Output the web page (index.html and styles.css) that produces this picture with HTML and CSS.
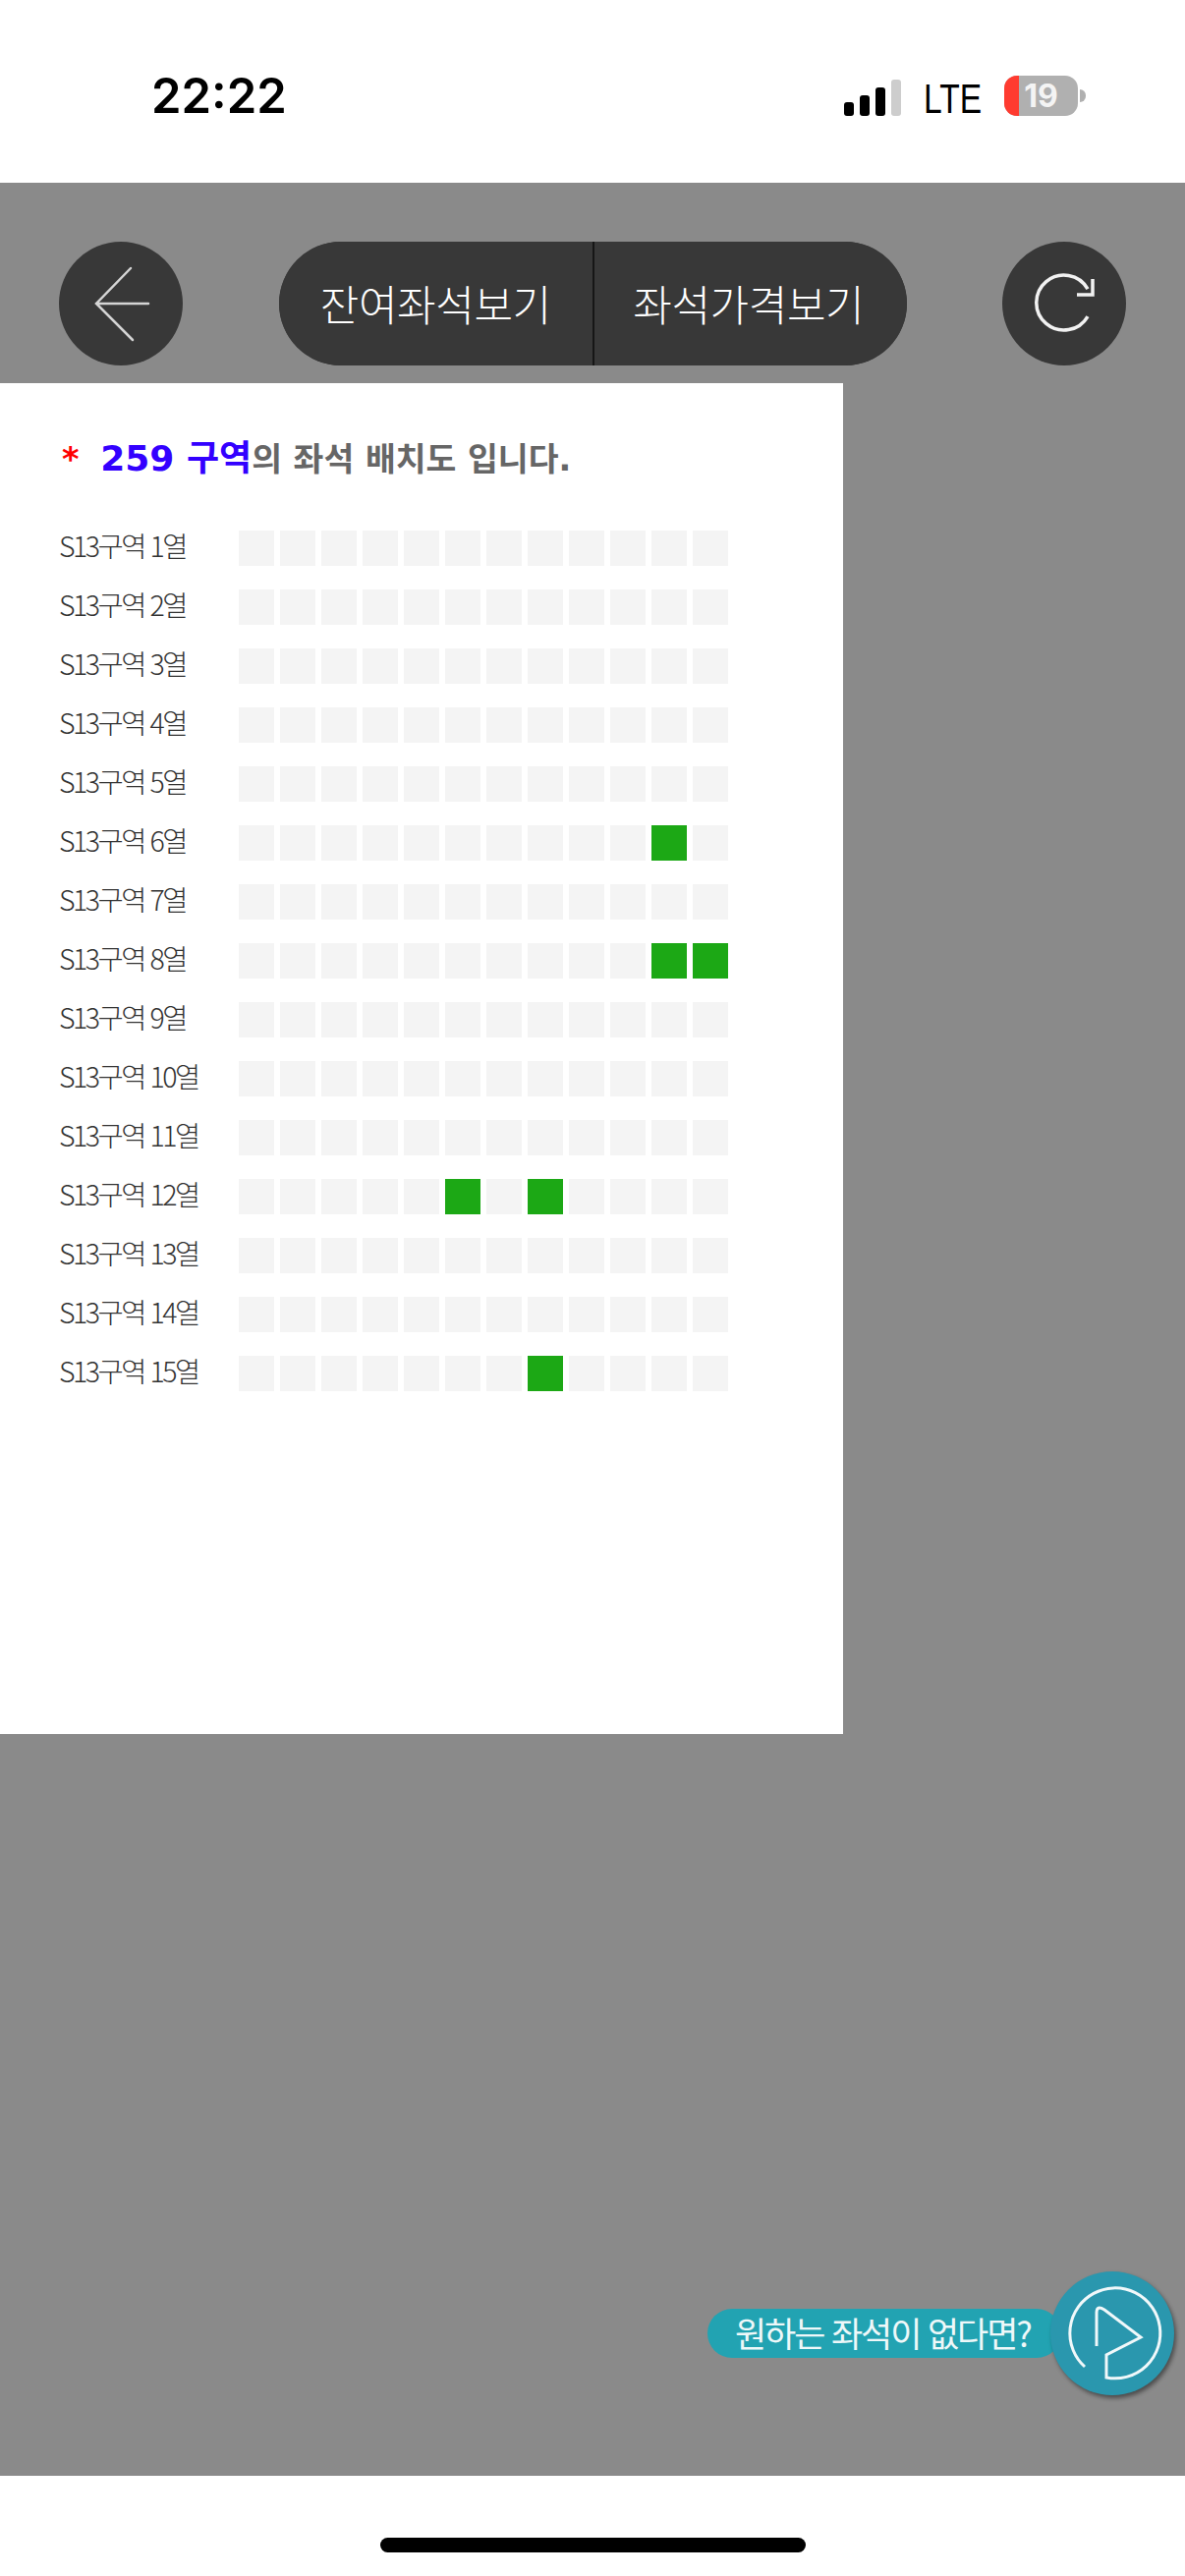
FILE: index.html
```html
<!DOCTYPE html>
<html lang="ko">
<head>
    <meta charset="UTF-8">
    <title>좌석 배치도</title>
    <link rel="stylesheet" href="styles.css">
</head>
<body>
    <div class="status-bar">
        <span class="clock">22:22</span>
        <div class="status-right">
            <div class="signal">
                <span class="bar bar-1"></span>
                <span class="bar bar-2"></span>
                <span class="bar bar-3"></span>
                <span class="bar bar-4"></span>
            </div>
            <span class="network">LTE</span>
            <div class="battery">
                <div class="battery-body">
                    <span class="battery-low"></span>
                    <span class="battery-num">19</span>
                </div>
                <span class="battery-nub"></span>
            </div>
        </div>
    </div>

    <div class="main">
        <div class="toolbar">
            <button class="round-btn">
                <svg width="126" height="126" viewBox="0 0 126 126" fill="none" stroke="#d4d4d4" stroke-width="2.5" stroke-linecap="round">
                    <path d="M73 27 L38 63 L75 100 M38 63 H91"/>
                </svg>
            </button>
            <div class="seat-tabs">
                <button class="tab">잔여좌석보기</button>
                <button class="tab tab-right">좌석가격보기</button>
            </div>
            <button class="round-btn">
                <svg width="126" height="126" viewBox="0 0 126 126" fill="none" stroke="#f2f2f2" stroke-width="3.5">
                    <path d="M87 48 A28 28 0 1 0 87 76"/>
                    <path d="M92 38 V54 H76"/>
                </svg>
            </button>
        </div>

        <div class="panel">
            <h2 class="panel-title"><span class="star">*</span> <span class="zone">259 구역</span>의 좌석 배치도 입니다.</h2>
            <div class="rows" id="seatRows">
                <!-- rows are inserted here -->
            </div>
        </div>

        <div class="fab">
            <span class="fab-label">원하는 좌석이 없다면?</span>
            <div class="fab-circle">
                <svg width="126" height="126" viewBox="0 0 126 126" fill="none" stroke="#f0f8fa" stroke-width="3">
                    <path d="M35 97 A46 46 0 1 1 57 108 V85 L92 67 L55 39 Q47 34 47 42 V76"/>
                </svg>
            </div>
        </div>
    </div>

    <div class="home-area">
        <span class="home-bar"></span>
    </div>

    <script>
        // row number -> seat numbers still open
        const openSeats = { 6: [11], 8: [11, 12], 12: [6, 8], 15: [8] };
        const seatRows = document.getElementById('seatRows');

        for (let r = 1; r <= 15; r++) {
            const row = document.createElement('div');
            row.className = 'row';
            let seats = '';
            for (let s = 1; s <= 12; s++) {
                const isOpen = openSeats[r] && openSeats[r].includes(s);
                seats += `<span class="seat${isOpen ? ' open' : ''}"></span>`;
            }
            row.innerHTML = `<span class="row-name">S13구역 ${r}열</span><div class="seats">${seats}</div>`;
            seatRows.appendChild(row);
        }
    </script>
</body>
</html>
```

FILE: styles.css
```css
* {
    box-sizing: border-box;
}
body {
    margin: 0;
    width: 1206px;
    height: 2622px;
    display: flex;
    flex-direction: column;
    overflow: hidden;
    background-color: #fff;
    font-family: "Noto Sans CJK KR", "Noto Sans", sans-serif;
}

/* status bar */
.status-bar {
    height: 186px;
    display: flex;
    justify-content: space-between;
    padding: 76px 101px 0 154px;
}
.clock {
    font-family: Inter, sans-serif;
    font-weight: 600;
    font-size: 49px;
    line-height: 44px;
    color: #000;
}
.status-right {
    display: flex;
    align-items: flex-start;
    height: 41px;
    margin-top: 1px;
}
.signal {
    display: flex;
    align-items: flex-end;
    gap: 6px;
    height: 39px;
    margin-top: 2px;
}
.bar {
    width: 10px;
    background-color: #000;
    border-radius: 3px;
}
.bar-1 { height: 14px; }
.bar-2 { height: 21px; }
.bar-3 { height: 29px; }
.bar-4 { height: 37px; background-color: #cdcdcd; }
.network {
    font-family: "Liberation Sans", sans-serif;
    font-size: 42px;
    line-height: 41px;
    margin: 3px 0 0 23px;
    width: 58px;
    color: #000;
    transform: scaleX(0.8);
    transform-origin: left center;
}
.battery {
    display: flex;
    align-items: center;
    margin-left: 24px;
}
.battery-body {
    position: relative;
    width: 75px;
    height: 41px;
    border-radius: 13px;
    background-color: #b0b0b0;
    overflow: hidden;
    text-align: center;
}
.battery-low {
    position: absolute;
    left: 0;
    top: 0;
    width: 15px;
    height: 41px;
    background-color: #ff3b30;
}
.battery-num {
    position: relative;
    font-family: Inter, sans-serif;
    font-weight: 700;
    font-size: 32px;
    line-height: 41px;
    color: #f4f4f4;
}
.battery-nub {
    width: 6px;
    height: 13px;
    margin-left: 2px;
    border-radius: 0 6px 6px 0;
    background-color: #b0b0b0;
}

/* gray layer */
.main {
    position: relative;
    flex: 1;
    background-color: #8a8a8a;
}
.toolbar {
    display: flex;
    justify-content: space-between;
    padding: 60px 60px 0;
}
.round-btn {
    width: 126px;
    height: 126px;
    padding: 0;
    border: none;
    border-radius: 50%;
    background-color: #383838;
}
.round-btn svg {
    display: block;
}
.seat-tabs {
    display: flex;
    width: 639px;
    height: 126px;
    border-radius: 63px;
    overflow: hidden;
    background-color: #383838;
}
.tab {
    width: 50%;
    padding: 0 0 2px;
    border: none;
    background-color: #383838;
    color: #fff;
    font-family: inherit;
    font-weight: 300;
    font-size: 43px;
    letter-spacing: -0.4px;
}
.tab-right {
    padding-right: 4px;
    border-left: 2px solid #161616;
}

/* seat panel */
.panel {
    width: 858px;
    height: 1375px;
    margin-top: 18px;
    padding: 50px 0 0 60px;
    background-color: #fff;
}
.panel-title {
    margin: 0 0 0 3px;
    font-family: "DejaVu Sans", "Noto Sans CJK KR", sans-serif;
    font-weight: 700;
    font-size: 33.5px;
    line-height: 54px;
    color: #666;
}
.star {
    color: #ff0000;
    margin-right: 10px;
}
.zone {
    color: #3300ff;
    font-size: 36px;
}
.rows {
    display: flex;
    flex-direction: column;
    gap: 24px;
    margin-top: 45px;
}
.row {
    display: flex;
    align-items: center;
    height: 36px;
}
.row-name {
    width: 183px;
    margin-top: -7px;
    font-weight: 300;
    font-size: 28.5px;
    letter-spacing: -2.5px;
    color: #333;
    white-space: nowrap;
}
.seats {
    display: flex;
    gap: 6px;
}
.seat {
    width: 36px;
    height: 36px;
    background-color: #f4f4f4;
}
.seat.open {
    background-color: #1ca815;
}

/* floating button */
.fab {
    position: absolute;
    left: 720px;
    top: 2126px;
    width: 475px;
    height: 126px;
    display: flex;
    align-items: center;
}
.fab-label {
    width: 360px;
    height: 50px;
    margin-top: -1px;
    padding-left: 28px;
    border-radius: 25px;
    background-color: #22a3b2;
    color: #eef8f9;
    font-size: 35px;
    font-weight: 400;
    letter-spacing: -2.1px;
    line-height: 47px;
    white-space: nowrap;
}
.fab-circle {
    position: absolute;
    left: 349px;
    top: 0;
    width: 126px;
    height: 126px;
    border-radius: 50%;
    background-color: #2a97ae;
    box-shadow: 2px 3px 4px rgba(0, 0, 0, 0.45);
}
.fab-circle svg {
    display: block;
}

/* home indicator */
.home-area {
    height: 102px;
    display: flex;
    justify-content: center;
    padding-top: 63px;
}
.home-bar {
    width: 433px;
    height: 15px;
    border-radius: 8px;
    background-color: #000;
}
```
